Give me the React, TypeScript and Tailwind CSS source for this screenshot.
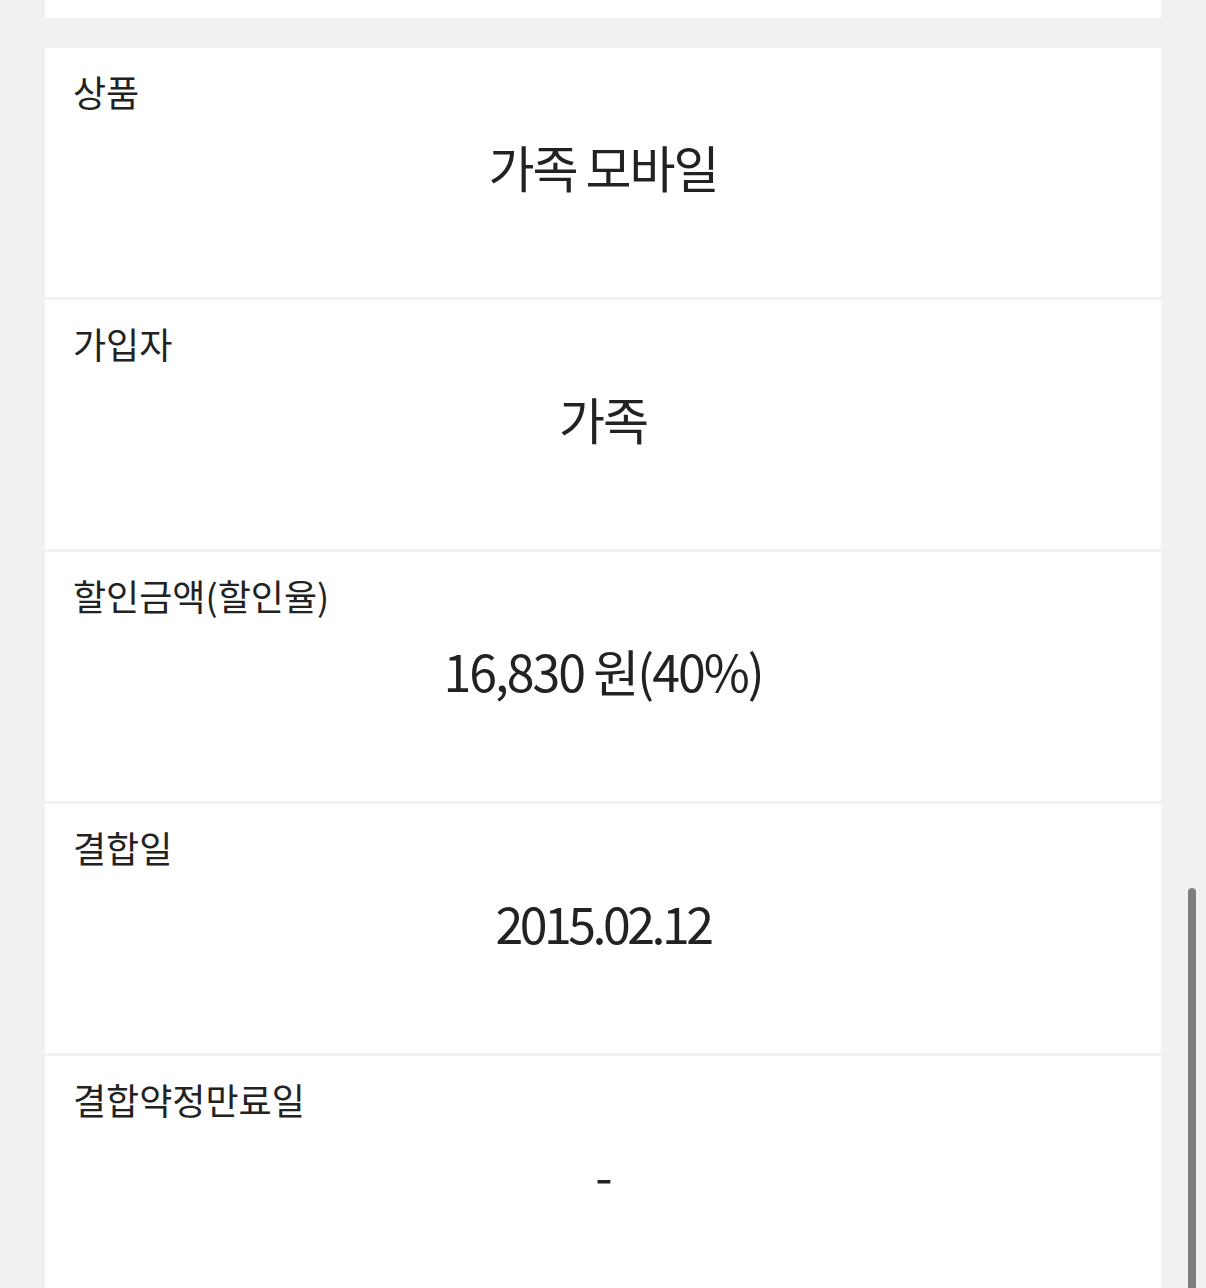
const rows = [
  { label: '상품', value: '가족 모바일', valueClass: 'tracking-[-2px]' },
  { label: '가입자', value: '가족', valueClass: 'tracking-[-2px]' },
  { label: '할인금액(할인율)', value: '16,830 원(40%)', valueClass: 'tracking-[-2px]' },
  { label: '결합일', value: '2015.02.12', valueClass: 'tracking-[-3.5px]' },
  { label: '결합약정만료일', value: '-', valueClass: 'tracking-[-2px]' },
];

export default function App() {
  return (
    <div
      className="relative h-[1288px] overflow-hidden bg-[#f1f1f1] px-[45px] text-[#222222]"
      style={{ fontFamily: '"Noto Sans CJK KR", "Noto Sans", sans-serif' }}
    >
      {/* 위쪽 카드 끝부분 */}
      <div className="h-[18px] bg-white" />

      <div className="mt-[30px] flex flex-col gap-[3px]">
        {rows.map((row) => (
          <div key={row.label} className="h-[249px] bg-white pl-[28px] pt-[18px]">
            <div className="text-[36px] leading-[50px] tracking-[0px]">{row.label}</div>
            <div className={`mt-[18px] pr-[28px] text-center text-[50px] leading-[64px] ${row.valueClass}`}>
              {row.value}
            </div>
          </div>
        ))}
      </div>

      {/* 스크롤바 */}
      <div className="absolute right-[10px] top-[888px] h-[420px] w-[8px] rounded-full bg-[#7f7f7f]" />
    </div>
  );
}
